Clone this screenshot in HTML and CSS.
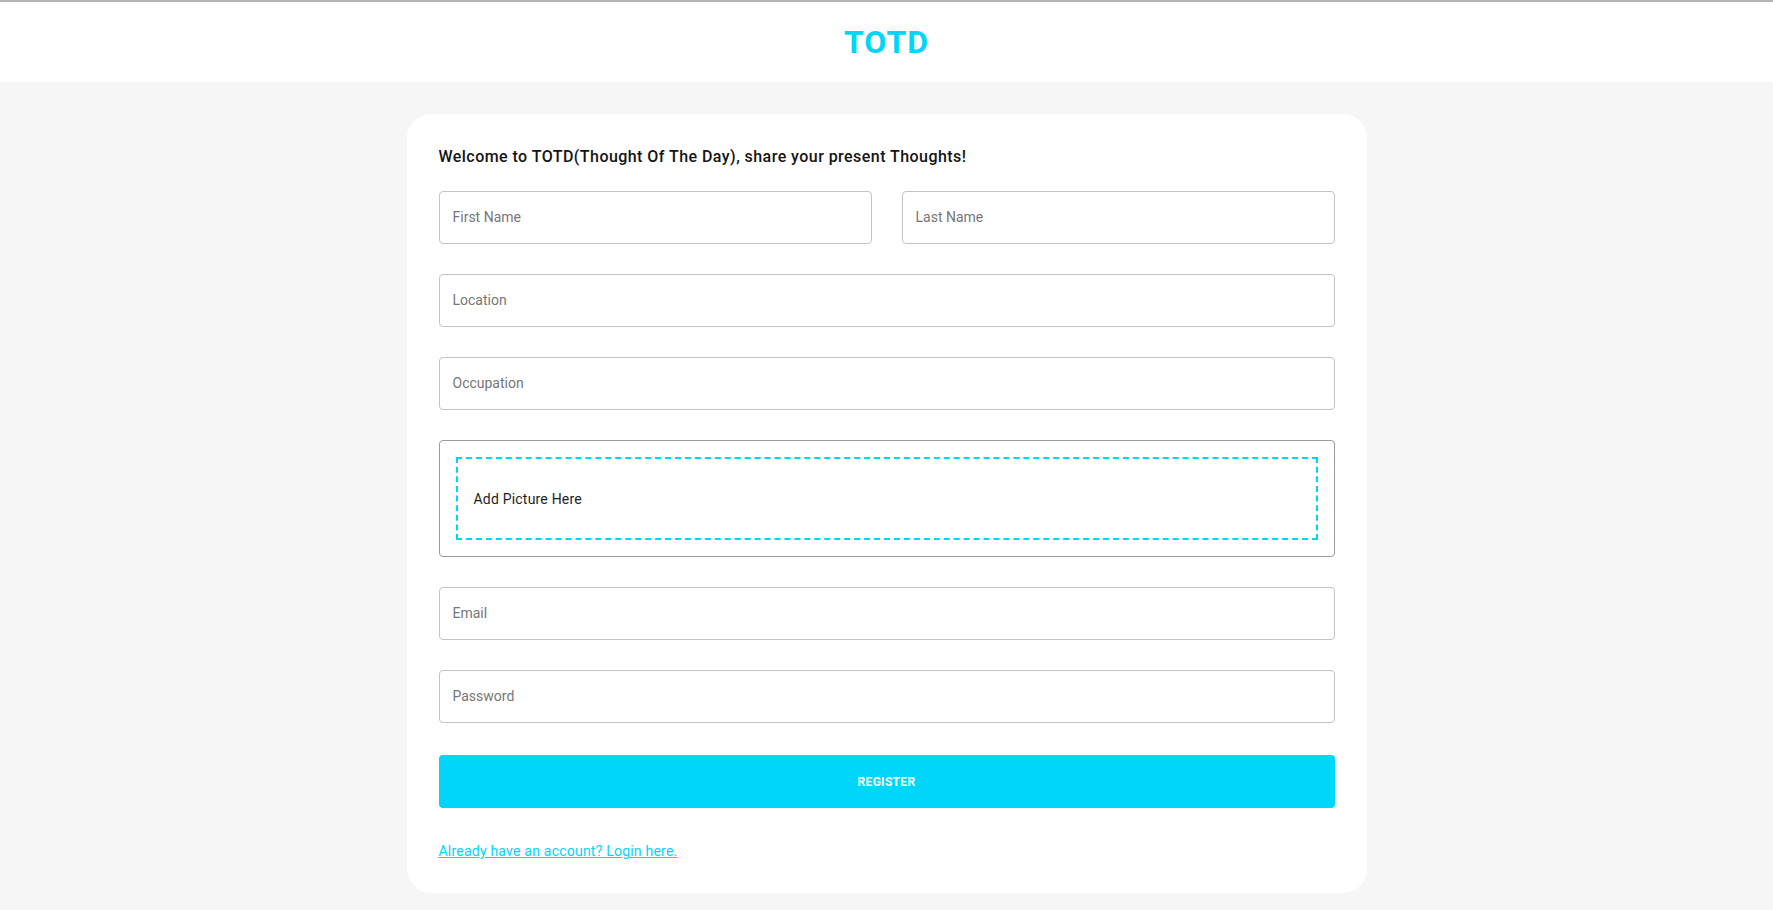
FILE: index.html
```html
<!DOCTYPE html>
<html lang="en">
<head>
<meta charset="utf-8">
<title>TOTD</title>
<link rel="stylesheet" href="styles.css">
</head>
<body>
<header class="topbar">
  <h1 class="brand">TOTD</h1>
</header>
<main class="page">
  <section class="card">
    <h2 class="welcome">Welcome to TOTD(Thought Of The Day), share your present Thoughts!</h2>
    <form class="form">
      <div class="row-two">
        <input class="field" type="text" placeholder="First Name">
        <input class="field" type="text" placeholder="Last Name">
      </div>
      <input class="field" type="text" placeholder="Location">
      <input class="field" type="text" placeholder="Occupation">
      <div class="picture-box">
        <div class="dropzone"><p class="dropzone-text">Add Picture Here</p></div>
      </div>
      <input class="field" type="email" placeholder="Email">
      <input class="field" type="password" placeholder="Password">
      <button class="register" type="button">REGISTER</button>
    </form>
    <a class="login-link" href="#">Already have an account? Login here.</a>
  </section>
</main>
</body>
</html>
```
FILE: styles.css
```css
* { box-sizing: border-box; }

html, body {
  margin: 0;
  padding: 0;
}

body {
  background: #f6f6f6;
  font-family: Roboto, "Liberation Sans", sans-serif;
  color: #1a1a1a;
}

.topbar {
  background: #ffffff;
  border-top: 2px solid #b4b4b8;
  height: 82px;
  display: flex;
  align-items: center;
  justify-content: center;
}

.brand {
  margin: 0;
  font-size: 32px;
  font-weight: 700;
  color: #00d5fa;
  line-height: 1;
  letter-spacing: 1px;
}

.page {
  display: flex;
  justify-content: center;
  padding-top: 32px;
  padding-bottom: 18px;
}

.card {
  width: 960px;
  background: #ffffff;
  border-radius: 24px;
  padding: 32px;
  display: flex;
  flex-direction: column;
}

.welcome {
  margin: 1px 0 24px 0;
  font-size: 16px;
  line-height: 20px;
  font-weight: 500;
  letter-spacing: 0.45px;
  color: #141414;
}

.form {
  display: flex;
  flex-direction: column;
  gap: 30px;
}

.row-two {
  display: grid;
  grid-template-columns: 1fr 1fr;
  gap: 30px;
}

.field {
  height: 53px;
  width: 100%;
  border: 1px solid #c4c4c4;
  border-radius: 4px;
  padding: 0 13px 1px 13px;
  font-family: inherit;
  font-size: 14px;
  color: #222;
  background: #fff;
  outline: none;
}

.field::placeholder {
  color: #767676;
}

.picture-box {
  border: 1px solid #9b9b9b;
  border-radius: 4px;
  padding: 16px;
}

.dropzone {
  height: 83px;
  border: 2px dashed #00d5fa;
  display: flex;
  align-items: center;
  padding: 0 16px;
}

.dropzone-text {
  margin: 0;
  font-size: 14px;
  letter-spacing: 0.2px;
  color: #1e1e1e;
}

.register {
  margin-top: 2px;
  height: 53px;
  border: none;
  border-radius: 4px;
  background: #00d5fa;
  color: #ffffff;
  font-family: inherit;
  font-size: 12px;
  font-weight: 700;
  letter-spacing: 0.3px;
  cursor: pointer;
}

.login-link {
  margin-top: 33px;
  align-self: flex-start;
  font-size: 14px;
  line-height: 20px;
  letter-spacing: 0.22px;
  color: #00d5fa;
  text-decoration: underline;
}
```
